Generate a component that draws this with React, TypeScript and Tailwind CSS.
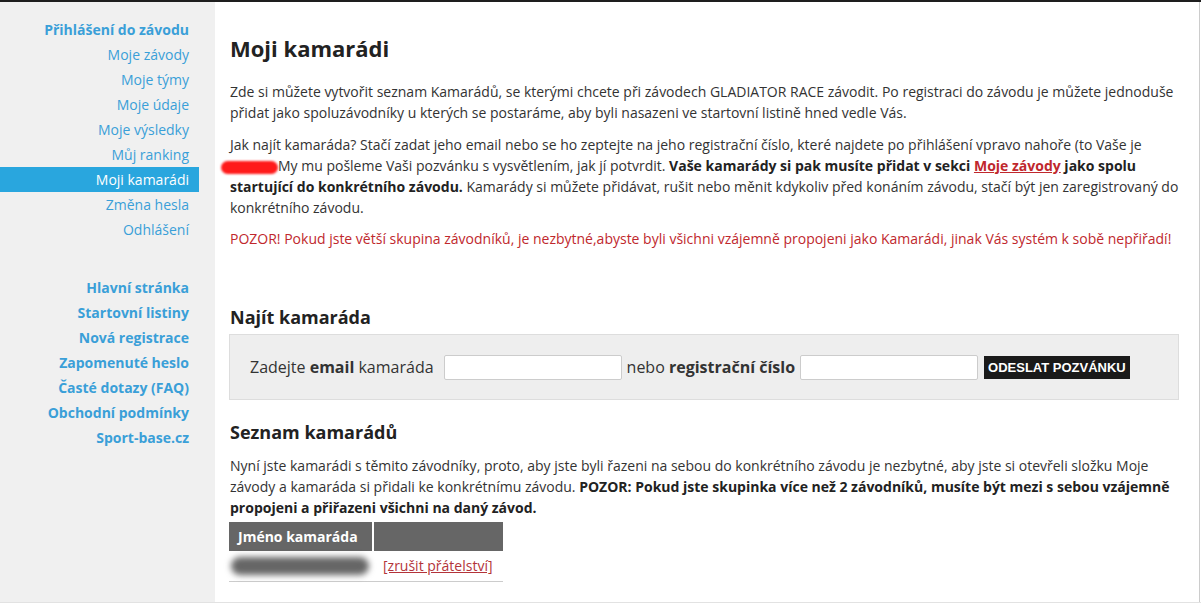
import React from 'react';

const accountLinks = [
  'Moje závody',
  'Moje týmy',
  'Moje údaje',
  'Moje výsledky',
  'Můj ranking',
  'Moji kamarádi',
  'Změna hesla',
  'Odhlášení',
];

const siteLinks = [
  'Hlavní stránka',
  'Startovní listiny',
  'Nová registrace',
  'Zapomenuté heslo',
  'Časté dotazy (FAQ)',
  'Obchodní podmínky',
  'Sport-base.cz',
];

function Sidebar() {
  return (
    <aside className="w-[215px] shrink-0 bg-[#f0f0f0] pt-[15px]">
      <ul className="w-[199px] text-right text-[14px] leading-[25px]">
        <li className="pr-[10px] font-bold text-[#3a9fd8]">Přihlášení do závodu</li>
        {accountLinks.map((label) => (
          <li
            key={label}
            className={
              label === 'Moji kamarádi'
                ? 'pr-[10px] bg-[#29a6de] text-white'
                : 'pr-[10px] text-[#3a9fd8]'
            }>
            {label}
          </li>
        ))}
      </ul>

      <ul className="w-[199px] mt-[33px] text-right text-[14px] leading-[25px] font-bold text-[#3a9fd8]">
        {siteLinks.map((label) => (
          <li key={label} className="pr-[10px]">
            {label}
          </li>
        ))}
      </ul>
    </aside>
  );
}

function InviteBox() {
  return (
    <div className="mt-[4px] h-[66px] border border-[#dddddd] bg-[#eeeeee] flex items-center pl-[20px] text-[16px] text-[#333333]">
      <span>
        Zadejte <b>email</b> kamaráda
      </span>
      <input className="ml-[10px] w-[178px] h-[25px] bg-white border border-[#cccccc] rounded-[2px]" />
      <span className="ml-[5px]">
        nebo <b>registrační číslo</b>
      </span>
      <input className="ml-[5px] w-[178px] h-[25px] bg-white border border-[#cccccc] rounded-[2px]" />
      <button
        className="ml-[6px] h-[23px] px-[4px] bg-[#1a1a1a] text-white text-[13px] font-bold uppercase"
        style={{ fontFamily: '"Liberation Sans", Arial, sans-serif' }}>
        Odeslat pozvánku
      </button>
    </div>
  );
}

function FriendsTable() {
  return (
    <table className="mt-[4px] w-[274px] text-[14px] border-collapse">
      <thead>
        <tr className="bg-[#666666] text-white h-[29px]">
          <th className="w-[144px] text-left font-bold pl-[9px] border-r-2 border-white">Jméno kamaráda</th>
          <th />
        </tr>
      </thead>
      <tbody>
        <tr className="h-[30px] border-b border-[#cccccc]">
          <td className="pl-[2px]">
            <div className="w-[138px] h-[18px] rounded-full bg-[#666666] blur-[3px]" />
          </td>
          <td className="pl-[10px]">
            <a className="text-[#b3343a] underline">[zrušit přátelství]</a>
          </td>
        </tr>
      </tbody>
    </table>
  );
}

export default function App() {
  return (
    <div
      className="w-[1201px] h-[606px] overflow-hidden bg-white"
      style={{ fontFamily: '"Open Sans", "Noto Sans", sans-serif' }}>
      <div className="h-[2px] bg-[#1e1e1e]" />
      <div className="flex h-[601px] border-b border-[#e2e2e2]">
        <Sidebar />
        <main className="w-[985px] border-r border-[#cccccc] pl-[14px] pt-[32px] text-[14px] leading-[21px] text-[#333333]">
          <div className="w-[950px]">
            <h1 className="text-[22px] leading-[29px] font-bold text-[#222222] pl-[1px]">Moji kamarádi</h1>

            <p className="mt-[18px] pl-[1px]">
              Zde si můžete vytvořit seznam Kamarádů, se kterými chcete při závodech GLADIATOR RACE závodit. Po
              registraci do závodu je můžete jednoduše přidat jako spoluzávodníky u kterých se postaráme, aby byli
              nasazeni ve startovní listině hned vedle Vás.
            </p>

            <p className="mt-[11px] pl-[1px]">
              Jak najít kamaráda? Stačí zadat jeho email nebo se ho zeptejte na jeho registrační číslo, které najdete
              po přihlášení vpravo nahoře (to Vaše je{' '}
              <span className="inline-block align-middle -ml-[9px] w-[57px] h-[13px] rounded-full bg-[#ff1a1a] blur-[1px]" />
              My mu pošleme Vaši pozvánku s vysvětlením, jak jí potvrdit.{' '}
              <b className="text-[#222222]">
                Vaše kamarády si pak musíte přidat v sekci{' '}
                <a className="text-[#c0282d] underline">Moje závody</a> jako spolu startující do konkrétního závodu.
              </b>{' '}
              Kamarády si můžete přidávat, rušit nebo měnit kdykoliv před konáním závodu, stačí být jen
              zaregistrovaný do konkrétního závodu.
            </p>

            <p className="mt-[10px] pl-[1px] text-[#c0282d]">
              POZOR! Pokud jste větší skupina závodníků, je nezbytné,abyste byli všichni vzájemně propojeni jako
              Kamarádi, jinak Vás systém k sobě nepřiřadí!
            </p>

            <h2 className="mt-[56px] text-[18px] leading-[25px] font-bold text-[#222222] pl-[1px]">Najít kamaráda</h2>
            <InviteBox />

            <h2 className="mt-[20px] text-[18px] leading-[25px] font-bold text-[#222222] pl-[1px]">Seznam kamarádů</h2>
            <p className="mt-[10px] pl-[1px]">
              Nyní jste kamarádi s těmito závodníky, proto, aby jste byli řazeni na sebou do konkrétního závodu je
              nezbytné, aby jste si otevřeli složku Moje závody a kamaráda si přidali ke konkrétnímu závodu.{' '}
              <b className="text-[#222222]">
                POZOR: Pokud jste skupinka více než 2 závodníků, musíte být mezi s sebou vzájemně propojeni a
                přiřazeni všichni na daný závod.
              </b>
            </p>

            <FriendsTable />
          </div>
        </main>
      </div>
    </div>
  );
}
